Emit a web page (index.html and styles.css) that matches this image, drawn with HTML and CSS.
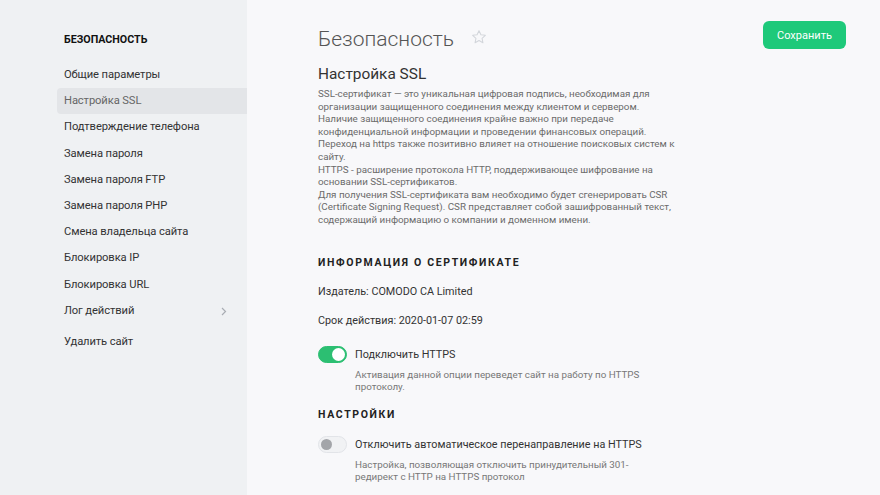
FILE: index.html
```html
<!DOCTYPE html>
<html lang="ru">
<head>
  <meta charset="UTF-8">
  <title>Безопасность</title>
  <link rel="stylesheet" href="styles.css">
</head>
<body>
  <div class="layout">
    <aside class="sidebar">
      <div class="side-title">БЕЗОПАСНОСТЬ</div>
      <ul class="menu">
        <li>Общие параметры</li>
        <li class="active">Настройка SSL</li>
        <li>Подтверждение телефона</li>
        <li>Замена пароля</li>
        <li>Замена пароля FTP</li>
        <li>Замена пароля PHP</li>
        <li>Смена владельца сайта</li>
        <li>Блокировка IP</li>
        <li>Блокировка URL</li>
        <li class="has-sub">Лог действий
          <svg class="chev" width="6" height="9" viewBox="0 0 6 9"><path d="M1 1l3.5 3.5L1 8" fill="none" stroke="#a9adb3" stroke-width="1.2"/></svg>
        </li>
        <li class="sep">Удалить сайт</li>
      </ul>
    </aside>
    <main class="content">
      <div class="head">
        <h1>Безопасность</h1>
        <svg class="star" width="16" height="16" viewBox="0 0 24 24"><path d="M12 2.5l2.9 6.1 6.6.8-4.9 4.6 1.3 6.6L12 17.3l-5.9 3.3 1.3-6.6-4.9-4.6 6.6-.8z" fill="none" stroke="#d3d6db" stroke-width="1.6" stroke-linejoin="round"/></svg>
        <button class="save-btn">Сохранить</button>
      </div>
      <h2>Настройка SSL</h2>
      <p class="intro">
        SSL-сертификат — это уникальная цифровая подпись, необходимая для<br>
        организации защищенного соединения между клиентом и сервером.<br>
        Наличие защищенного соединения крайне важно при передаче<br>
        конфиденциальной информации и проведении финансовых операций.<br>
        Переход на https также позитивно влияет на отношение поисковых систем к<br>
        сайту.<br>
        HTTPS - расширение протокола HTTP, поддерживающее шифрование на<br>
        основании SSL-сертификатов.<br>
        Для получения SSL-сертификата вам необходимо будет сгенерировать CSR<br>
        (Certificate Signing Request). CSR представляет собой зашифрованный текст,<br>
        содержащий информацию о компании и доменном имени.
      </p>

      <h3>Информация о сертификате</h3>
      <div class="info">Издатель: COMODO CA Limited</div>
      <div class="info">Срок действия: 2020-01-07 02:59</div>

      <div class="option">
        <span class="toggle on"></span>
        <div class="opt-body">
          <div class="opt-label">Подключить HTTPS</div>
          <div class="opt-desc">Активация данной опции переведет сайт на работу по HTTPS<br>протоколу.</div>
        </div>
      </div>

      <h3 class="settings">Настройки</h3>
      <div class="option option-last">
        <span class="toggle"></span>
        <div class="opt-body">
          <div class="opt-label">Отключить автоматическое перенаправление на HTTPS</div>
          <div class="opt-desc">Настройка, позволяющая отключить принудительный 301-<br>редирект с HTTP на HTTPS протокол</div>
        </div>
      </div>
    </main>
  </div>
</body>
</html>
```

FILE: styles.css
```css
body { margin: 0; font-family: "Roboto", "Liberation Sans", sans-serif; background: #f8f8fa; color: #333; }
.layout { display: flex; min-height: 495px; }

.sidebar { width: 247px; flex-shrink: 0; background: #eff1f3; padding-top: 30px; box-sizing: border-box; }
.side-title { padding-left: 64px; font-size: 10.7px; font-weight: bold; line-height: 20px; color: #111; margin-bottom: 12px; }
.menu { list-style: none; margin: 0; padding: 0 0 0 57px; }
.menu li { height: 26.2px; line-height: 26.2px; padding-left: 7px; font-size: 11.2px; letter-spacing: -0.1px; color: #333; border-radius: 4px 0 0 4px; display: flex; align-items: center; justify-content: space-between; padding-right: 20px; }
.menu li.active { background: #e3e5e8; color: #666; }
.menu li.sep { margin-top: 5px; }
.chev { margin-top: 1px; }

.content { flex: 1; padding: 0 34px 0 71px; }
.head { display: flex; align-items: center; padding-top: 21px; height: 28px; }
h1 { margin: 8px 0 0; font-size: 21px; font-weight: 300; color: #555; line-height: 24px; }
.star { margin-left: 17px; margin-top: 4px; }
.save-btn { margin-left: auto; width: 83px; height: 28px; border: 0; border-radius: 6px; background: #1ec97a; color: #fff; font-family: inherit; font-size: 11px; }

h2 { margin: 15px 0 0; font-size: 15.4px; font-weight: 400; color: #333; line-height: 20px; }
.intro { margin: 4px 0 0; font-size: 9.8px; line-height: 12.6px; color: #6b6b6b; }

h3 { margin: 28px 0 0; font-size: 10.5px; font-weight: bold; letter-spacing: 1.65px; text-transform: uppercase; color: #222; line-height: 16px; }
.info { font-size: 10.8px; line-height: 16px; color: #333; margin-top: 13px; }

.option { display: flex; margin-top: 17px; }
.option-last { margin-top: 13px; }
.toggle { width: 29px; height: 17px; border-radius: 9px; background: #f1f2f4; border: 1px solid #e2e4e8; box-sizing: border-box; position: relative; flex-shrink: 0; }
.toggle::after { content: ""; position: absolute; left: 2px; top: 2px; width: 11px; height: 11px; border-radius: 50%; background: #a3a5a9; }
.toggle.on { background: #2cbf72; border-color: #2cbf72; }
.toggle.on::after { left: auto; right: 1px; top: 1px; width: 13px; height: 13px; background: #fff; }
.opt-body { margin-left: 8px; }
.opt-label { font-size: 10.8px; line-height: 17px; color: #333; }
.opt-desc { margin-top: 6px; font-size: 9.8px; line-height: 12px; color: #777; }

h3.settings { margin-top: 14px; }
```
